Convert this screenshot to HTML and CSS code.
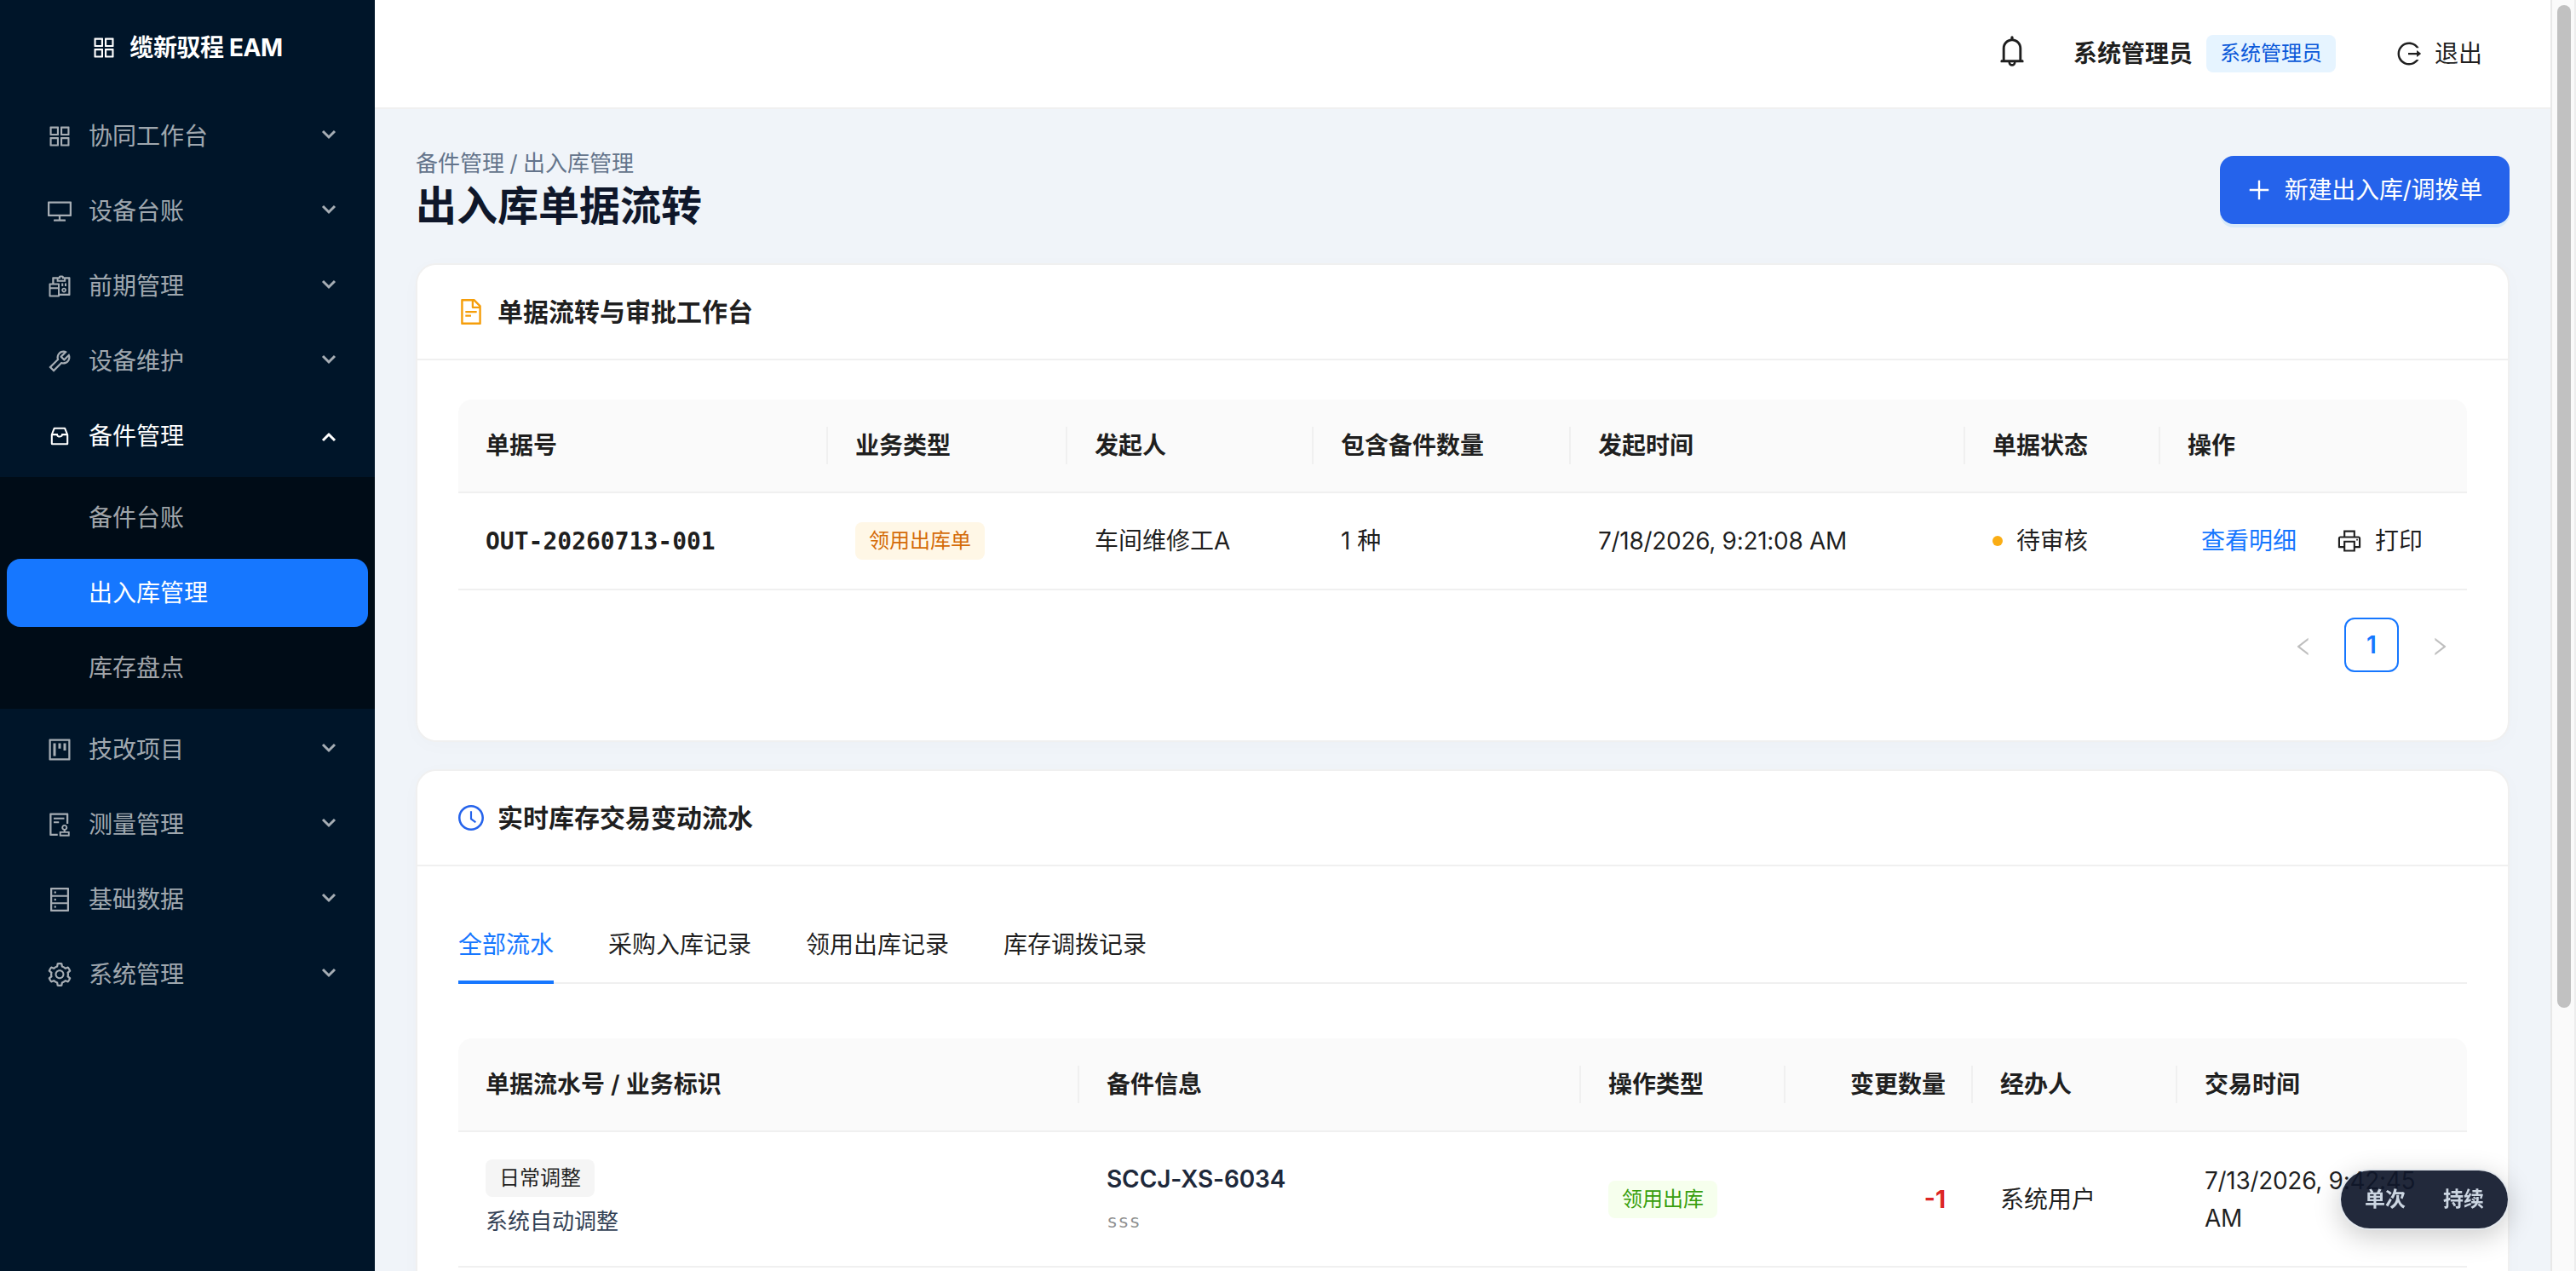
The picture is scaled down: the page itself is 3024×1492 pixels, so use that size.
FILE: index.html
```html
<!DOCTYPE html>
<html lang="zh-CN">
<head>
    <meta charset="utf-8">
    <title>缆新驭程 EAM</title>
    <link rel="stylesheet" href="styles.css">
</head>
<body>
    <!-- icon sprite -->
    <svg class="sprite">
        <symbol id="i-app" viewBox="64 64 896 896"><path d="M464 144H160c-8.8 0-16 7.2-16 16v304c0 8.8 7.2 16 16 16h304c8.8 0 16-7.2 16-16V160c0-8.8-7.2-16-16-16zm-52 268H212V212h200v200zm452-268H560c-8.8 0-16 7.2-16 16v304c0 8.8 7.2 16 16 16h304c8.8 0 16-7.2 16-16V160c0-8.8-7.2-16-16-16zm-52 268H612V212h200v200zM464 544H160c-8.8 0-16 7.2-16 16v304c0 8.8 7.2 16 16 16h304c8.8 0 16-7.2 16-16V560c0-8.8-7.2-16-16-16zm-52 268H212V612h200v200zm452-268H560c-8.8 0-16 7.2-16 16v304c0 8.8 7.2 16 16 16h304c8.8 0 16-7.2 16-16V560c0-8.8-7.2-16-16-16zm-52 268H612V612h200v200z"/></symbol>
        <symbol id="i-desktop" viewBox="64 64 896 896"><path d="M928 140H96c-17.7 0-32 14.3-32 32v496c0 17.7 14.3 32 32 32h380v112H304c-8.8 0-16 7.2-16 16v48c0 4.4 3.6 8 8 8h432c4.4 0 8-3.6 8-8v-48c0-8.8-7.2-16-16-16H548V700h380c17.7 0 32-14.3 32-32V172c0-17.7-14.3-32-32-32zm-40 488H136V212h752v416z"/></symbol>
        <symbol id="i-recon" viewBox="64 64 896 896"><path d="M676 565c-50.8 0-92 41.2-92 92s41.2 92 92 92 92-41.2 92-92-41.2-92-92-92zm0 126c-18.8 0-34-15.2-34-34s15.2-34 34-34 34 15.2 34 34-15.2 34-34 34zm204-523H668c0-30.9-25.1-56-56-56h-80c-30.9 0-56 25.1-56 56H264c-17.7 0-32 14.3-32 32v200h-88c-17.7 0-32 14.3-32 32v448c0 17.7 14.3 32 32 32h336c17.7 0 32-14.3 32-32v-16h368c17.7 0 32-14.3 32-32V200c0-17.7-14.3-32-32-32zm-412 64h72v-56h64v56h72v48H468v-48zm-20 616H176V616h272v232zm0-296H176v-88h272v88zm392 240H512V432c0-17.7-14.3-32-32-32H304V240h100v104h336V240h100v552z"/><path d="M704 408v96c0 4.4 3.6 8 8 8h48c4.4 0 8-3.6 8-8v-96c0-4.4-3.6-8-8-8h-48c-4.4 0-8 3.6-8 8zM592 512h48c4.4 0 8-3.6 8-8v-96c0-4.4-3.6-8-8-8h-48c-4.4 0-8 3.6-8 8v96c0 4.4 3.6 8 8 8z"/></symbol>
        <symbol id="i-tool" viewBox="64 64 896 896"><path d="M876.6 239.5c-.5-.9-1.2-1.8-2-2.5-5-5-13.1-5-18.1 0L684.2 409.3l-67.9-67.9L788.7 169c.8-.8 1.4-1.6 2-2.5 3.6-6.1 1.6-13.9-4.5-17.5-98.2-58-226.8-44.7-311.3 39.7-67 67-89.2 162-66.5 247.4l-293 293c-3 3-2.8 7.9.3 11l169.7 169.7c3.1 3.1 8.1 3.3 11 .3l292.9-292.9c85.5 22.8 180.5.7 247.6-66.4 84.4-84.5 97.7-213.1 39.7-311.3zM786 499.8c-58.1 58.1-145.3 69.3-214.6 33.6l-8.8 8.8-.1-.1-274 274.1-79.2-79.2 230.1-230.1s0 .1.1.1l52.8-52.8c-35.7-69.3-24.5-156.5 33.6-214.6a184.2 184.2 0 01144-53.5L537 318.9a32.05 32.05 0 000 45.3l124.5 124.5a32.05 32.05 0 0045.3 0l132.8-132.8c3.7 51.8-14.4 104.8-53.6 143.9z"/></symbol>
        <symbol id="i-inbox" viewBox="0 0 1024 1024"><path d="M885.2 446.3l-.2-.8-112.2-285.1c-5-16.1-19.9-27.2-36.8-27.2H281.2c-17 0-32.1 11.3-36.9 27.6L139.4 443l-.3.7-.2.8c-1.3 4.9-1.7 9.9-1 14.8-.1 1.6-.2 3.2-.2 4.8V830a60.9 60.9 0 0060.8 60.8h627.2c33.5 0 60.8-27.3 60.9-60.8V464.1c0-1.3 0-2.6-.1-3.7.4-4.9 0-9.6-1.3-14.1zm-295.8-43l-.3 15.7c-.8 44.9-31.8 75.1-77.1 75.1-22.1 0-41.1-7.1-54.8-20.6S436 441.2 435.6 419l-.3-15.7H229.5L309 210h399.2l81.7 193.3H589.4zm-375 76.8h157.3c24.3 57.1 76 90.8 140.4 90.8 33.7 0 65-9.4 90.3-27.2 22.2-15.6 39.5-37.4 50.7-63.6h156.5V814H214.4V480.1z"/></symbol>
        <symbol id="i-project" viewBox="64 64 896 896"><path d="M280 752h80c4.4 0 8-3.6 8-8V280c0-4.4-3.6-8-8-8h-80c-4.4 0-8 3.6-8 8v464c0 4.4 3.6 8 8 8zm192-280h80c4.4 0 8-3.6 8-8V280c0-4.4-3.6-8-8-8h-80c-4.4 0-8 3.6-8 8v184c0 4.4 3.6 8 8 8zm192 72h80c4.4 0 8-3.6 8-8V280c0-4.4-3.6-8-8-8h-80c-4.4 0-8 3.6-8 8v256c0 4.4 3.6 8 8 8zm216-432H144c-17.7 0-32 14.3-32 32v736c0 17.7 14.3 32 32 32h736c17.7 0 32-14.3 32-32V144c0-17.7-14.3-32-32-32zm-40 728H184V184h656v656z"/></symbol>
        <symbol id="i-audit" viewBox="64 64 896 896"><path d="M296 250c-4.4 0-8 3.6-8 8v48c0 4.4 3.6 8 8 8h384c4.4 0 8-3.6 8-8v-48c0-4.4-3.6-8-8-8H296zm184 144H296c-4.4 0-8 3.6-8 8v48c0 4.4 3.6 8 8 8h184c4.4 0 8-3.6 8-8v-48c0-4.4-3.6-8-8-8zm-48 458H208V148h560v320c0 4.4 3.6 8 8 8h56c4.4 0 8-3.6 8-8V108c0-17.7-14.3-32-32-32H168c-17.7 0-32 14.3-32 32v784c0 17.7 14.3 32 32 32h264c4.4 0 8-3.6 8-8v-56c0-4.4-3.6-8-8-8zm440-88H728v-36.6c46.3-13.8 80-56.6 80-107.4 0-61.9-50.1-112-112-112s-112 50.1-112 112c0 50.7 33.7 93.6 80 107.4V764H520c-8.8 0-16 7.2-16 16v152c0 8.8 7.2 16 16 16h352c8.8 0 16-7.2 16-16V780c0-8.8-7.2-16-16-16zM646 620c0-27.6 22.4-50 50-50s50 22.4 50 50-22.4 50-50 50-50-22.4-50-50zm180 266H566v-60h260v60z"/></symbol>
        <symbol id="i-database" viewBox="64 64 896 896"><path d="M832 64H192c-17.7 0-32 14.3-32 32v832c0 17.7 14.3 32 32 32h640c17.7 0 32-14.3 32-32V96c0-17.7-14.3-32-32-32zm-600 72h560v208H232V136zm560 480H232V408h560v208zm0 272H232V680h560v208zM304 240a40 40 0 1080 0 40 40 0 10-80 0zm0 272a40 40 0 1080 0 40 40 0 10-80 0zm0 272a40 40 0 1080 0 40 40 0 10-80 0z"/></symbol>
        <symbol id="i-setting" viewBox="64 64 896 896"><path d="M924.8 625.7l-65.5-56c3.1-19 4.7-38.4 4.7-57.8s-1.6-38.8-4.7-57.8l65.5-56a32.03 32.03 0 009.3-35.2l-.9-2.6a443.74 443.74 0 00-79.7-137.9l-1.8-2.1a32.12 32.12 0 00-35.1-9.5l-81.3 28.9c-30-24.6-63.5-44-99.7-57.6l-15.7-85a32.05 32.05 0 00-25.8-25.7l-2.7-.5c-52.1-9.4-106.9-9.4-159 0l-2.7.5a32.05 32.05 0 00-25.8 25.7l-15.8 85.4a351.86 351.86 0 00-99 57.4l-81.9-29.1a32 32 0 00-35.1 9.5l-1.8 2.1a446.02 446.02 0 00-79.7 137.9l-.9 2.6c-4.5 12.5-.8 26.5 9.3 35.2l66.3 56.6c-3.1 18.8-4.6 38-4.6 57.1 0 19.2 1.5 38.4 4.6 57.1L99 625.5a32.03 32.03 0 00-9.3 35.2l.9 2.6c18.1 50.4 44.9 96.9 79.7 137.9l1.8 2.1a32.12 32.12 0 0035.1 9.5l81.9-29.1c29.8 24.5 63.1 43.9 99 57.4l15.8 85.4a32.05 32.05 0 0025.8 25.7l2.7.5a449.4 449.4 0 00159 0l2.7-.5a32.05 32.05 0 0025.8-25.7l15.7-85a350 350 0 0099.7-57.6l81.3 28.9a32 32 0 0035.1-9.5l1.8-2.1c34.8-41.1 61.6-87.5 79.7-137.9l.9-2.6c4.5-12.3.8-26.3-9.3-35zM788.3 465.9c2.5 15.1 3.8 30.6 3.8 46.1s-1.3 31-3.8 46.1l-6.6 40.1 74.7 63.9a370.03 370.03 0 01-42.6 73.6L721 702.8l-31.4 25.8c-23.9 19.6-50.5 35-79.3 45.8l-38.1 14.3-17.9 97a377.5 377.5 0 01-85 0l-17.9-97.2-37.8-14.5c-28.5-10.8-55-26.2-78.7-45.7l-31.4-25.9-93.4 33.2c-17-22.9-31.2-47.6-42.6-73.6l75.5-64.5-6.5-40c-2.4-14.9-3.7-30.3-3.7-45.5 0-15.3 1.2-30.6 3.7-45.5l6.5-40-75.5-64.5c11.3-26.1 25.6-50.7 42.6-73.6l93.4 33.2 31.4-25.9c23.7-19.5 50.2-34.9 78.7-45.7l37.9-14.3 17.9-97.2c28.1-3.2 56.8-3.2 85 0l17.9 97 38.1 14.3c28.7 10.8 55.4 26.2 79.3 45.8l31.4 25.8 92.8-32.9c17 22.9 31.2 47.6 42.6 73.6L781.8 426l6.5 39.9zM512 326c-97.2 0-176 78.8-176 176s78.8 176 176 176 176-78.8 176-176-78.8-176-176-176zm79.2 255.2A111.6 111.6 0 01512 614c-29.9 0-58-11.7-79.2-32.8A111.6 111.6 0 01400 502c0-29.9 11.7-58 32.8-79.2C454 401.6 482.1 390 512 390c29.9 0 58 11.6 79.2 32.8A111.6 111.6 0 01624 502c0 29.9-11.7 58-32.8 79.2z"/></symbol>
        <symbol id="i-chevron" viewBox="0 0 18 12"><path d="M2 2l7 7 7-7" fill="none" stroke="currentColor" stroke-width="3"/></symbol>
        <symbol id="i-bell" viewBox="64 64 896 896"><path d="M816 768h-24V428c0-141.1-104.3-257.8-240-277.2V112c0-22.1-17.9-40-40-40s-40 17.9-40 40v38.8C336.3 170.2 232 286.9 232 428v340h-24c-17.7 0-32 14.3-32 32v32c0 4.4 3.6 8 8 8h216c0 61.8 50.2 112 112 112s112-50.2 112-112h216c4.4 0 8-3.6 8-8v-32c0-17.7-14.3-32-32-32zM512 888c-26.5 0-48-21.5-48-48h96c0 26.5-21.5 48-48 48zM304 768V428c0-55.6 21.6-107.8 60.9-147.1S456.4 220 512 220c55.6 0 107.8 21.6 147.1 60.9S720 372.4 720 428v340H304z"/></symbol>
        <symbol id="i-logout" viewBox="64 64 896 896"><path d="M868 732h-70.3c-4.8 0-9.3 2.1-12.3 5.8-7 8.5-14.5 16.7-22.4 24.5a353.84 353.84 0 01-112.7 75.9A352.8 352.8 0 01512.4 866c-47.9 0-94.3-9.4-137.9-27.8a353.84 353.84 0 01-112.7-75.9 353.28 353.28 0 01-76-112.5C167.3 606.2 158 559.9 158 512s9.4-94.2 27.8-137.8c17.8-42.1 43.4-80 76-112.5s70.5-58.1 112.7-75.9c43.6-18.4 90-27.8 137.9-27.8 47.9 0 94.3 9.3 137.9 27.8 42.2 17.8 80.1 43.4 112.7 75.9 7.9 7.9 15.3 16.1 22.4 24.5 3 3.7 7.6 5.8 12.3 5.8H868c6.3 0 10.2-7 6.7-12.3C798 160.5 663.8 81.6 511.3 82 271.7 82.6 79.6 277.1 82 516.4 84.4 751.9 276.2 942 512.4 942c152.1 0 285.7-78.8 362.3-197.7 3.4-5.3-.4-12.3-6.7-12.3zm88.9-226.3L815 393.7c-5.3-4.2-13-.4-13 6.3v76H488c-4.4 0-8 3.6-8 8v56c0 4.4 3.6 8 8 8h314v76c0 6.7 7.8 10.5 13 6.3l141.9-112a8 8 0 000-12.6z"/></symbol>
        <symbol id="i-plus" viewBox="64 64 896 896"><path d="M482 152h60q8 0 8 8v704q0 8-8 8h-60q-8 0-8-8V160q0-8 8-8z"/><path d="M192 474h672q8 0 8 8v60q0 8-8 8H160q-8 0-8-8v-60q0-8 8-8z"/></symbol>
        <symbol id="i-file" viewBox="64 64 896 896"><path d="M854.6 288.6L639.4 73.4c-6-6-14.1-9.4-22.6-9.4H192c-17.7 0-32 14.3-32 32v832c0 17.7 14.3 32 32 32h640c17.7 0 32-14.3 32-32V311.3c0-8.5-3.4-16.7-9.4-22.7zM790.2 326H602V137.8L790.2 326zm1.8 562H232V136h302v216a42 42 0 0042 42h216v494zM504 618H320c-4.4 0-8 3.6-8 8v48c0 4.4 3.6 8 8 8h184c4.4 0 8-3.6 8-8v-48c0-4.4-3.6-8-8-8zM312 490v48c0 4.4 3.6 8 8 8h384c4.4 0 8-3.6 8-8v-48c0-4.4-3.6-8-8-8H320c-4.4 0-8 3.6-8 8z"/></symbol>
        <symbol id="i-clock" viewBox="64 64 896 896"><path d="M512 64C264.6 64 64 264.6 64 512s200.6 448 448 448 448-200.6 448-448S759.4 64 512 64zm0 820c-205.4 0-372-166.6-372-372s166.6-372 372-372 372 166.6 372 372-166.6 372-372 372z"/><path d="M686.7 638.6L544.1 535.5V288c0-4.4-3.6-8-8-8H488c-4.4 0-8 3.6-8 8v275.4c0 2.6 1.2 5 3.3 6.5l165.4 120.6c3.6 2.6 8.6 1.8 11.2-1.7l28.6-39c2.6-3.7 1.8-8.7-1.8-11.2z"/></symbol>
        <symbol id="i-printer" viewBox="64 64 896 896"><path d="M820 436h-40c-4.4 0-8 3.6-8 8v40c0 4.4 3.6 8 8 8h40c4.4 0 8-3.6 8-8v-40c0-4.4-3.6-8-8-8zm32-104H732V120c0-4.4-3.6-8-8-8H300c-4.4 0-8 3.6-8 8v212H172c-44.2 0-80 35.8-80 80v328c0 17.7 14.3 32 32 32h168v132c0 4.4 3.6 8 8 8h424c4.4 0 8-3.6 8-8V772h168c17.7 0 32-14.3 32-32V412c0-44.2-35.8-80-80-80zM360 180h304v152H360V180zm304 664H360V568h304v276zm200-140H732V500H292v204H160V412c0-6.6 5.4-12 12-12h680c6.6 0 12 5.4 12 12v292z"/></symbol>
        <symbol id="i-left" viewBox="64 64 896 896"><path d="M724 218.3V141c0-6.7-7.7-10.4-12.9-6.3L260.3 486.8a31.86 31.86 0 000 50.3l450.8 352.1c5.3 4.1 12.9.4 12.9-6.3v-77.3c0-4.9-2.3-9.6-6.1-12.6l-360-281 360-281.1c3.8-3 6.1-7.7 6.1-12.6z"/></symbol>
        <symbol id="i-right" viewBox="64 64 896 896"><path d="M765.7 486.8L314.9 134.7A7.97 7.97 0 00302 141v77.3c0 4.9 2.3 9.6 6.1 12.6l360 281.1-360 281.1c-3.9 3-6.1 7.7-6.1 12.6V883c0 6.7 7.7 10.4 12.9 6.3l450.8-352.1a31.96 31.96 0 000-50.4z"/></symbol>
    </svg>

    <aside class="sider">
        <div class="logo"><svg class="icon"><use href="#i-app"/></svg><span>缆新驭程 EAM</span></div>
        <nav class="menu">
            <a class="item"><svg class="icon"><use href="#i-app"/></svg><span>协同工作台</span><svg class="arrow"><use href="#i-chevron"/></svg></a>
            <a class="item"><svg class="icon"><use href="#i-desktop"/></svg><span>设备台账</span><svg class="arrow"><use href="#i-chevron"/></svg></a>
            <a class="item"><svg class="icon"><use href="#i-recon"/></svg><span>前期管理</span><svg class="arrow"><use href="#i-chevron"/></svg></a>
            <a class="item"><svg class="icon"><use href="#i-tool"/></svg><span>设备维护</span><svg class="arrow"><use href="#i-chevron"/></svg></a>
            <a class="item open"><svg class="icon"><use href="#i-inbox"/></svg><span>备件管理</span><svg class="arrow"><use href="#i-chevron"/></svg></a>
            <div class="submenu">
                <a class="item">备件台账</a>
                <a class="item selected">出入库管理</a>
                <a class="item">库存盘点</a>
            </div>
            <a class="item"><svg class="icon"><use href="#i-project"/></svg><span>技改项目</span><svg class="arrow"><use href="#i-chevron"/></svg></a>
            <a class="item"><svg class="icon"><use href="#i-audit"/></svg><span>测量管理</span><svg class="arrow"><use href="#i-chevron"/></svg></a>
            <a class="item"><svg class="icon"><use href="#i-database"/></svg><span>基础数据</span><svg class="arrow"><use href="#i-chevron"/></svg></a>
            <a class="item"><svg class="icon"><use href="#i-setting"/></svg><span>系统管理</span><svg class="arrow"><use href="#i-chevron"/></svg></a>
        </nav>
    </aside>

    <div class="layout">
        <header class="header">
            <svg class="icon bell"><use href="#i-bell"/></svg>
            <b class="user">系统管理员</b>
            <span class="tag blue">系统管理员</span>
            <a class="logout"><svg class="icon"><use href="#i-logout"/></svg>退出</a>
        </header>

        <main class="content">
            <div class="page-head">
                <div class="page-title">
                    <div class="crumb">备件管理 / 出入库管理</div>
                    <h1>出入库单据流转</h1>
                </div>
                <button class="primary"><svg class="icon"><use href="#i-plus"/></svg>新建出入库/调拨单</button>
            </div>

            <section class="card">
                <div class="card-head"><svg class="icon orange"><use href="#i-file"/></svg>单据流转与审批工作台</div>
                <div class="card-body">
                    <table class="table orders">
                        <colgroup><col class="o1"><col class="o2"><col class="o3"><col class="o4"><col class="o5"><col class="o6"><col class="o7"></colgroup>
                        <thead>
                            <tr><th>单据号</th><th>业务类型</th><th>发起人</th><th>包含备件数量</th><th>发起时间</th><th>单据状态</th><th>操作</th></tr>
                        </thead>
                        <tbody>
                            <tr>
                                <td><span class="code">OUT-20260713-001</span></td>
                                <td><span class="tag amber">领用出库单</span></td>
                                <td>车间维修工A</td>
                                <td>1 种</td>
                                <td><span class="date">7/18/2026, 9:21:08 AM</span></td>
                                <td><div class="status"><i class="dot"></i>待审核</div></td>
                                <td><div class="actions"><a class="link">查看明细</a><a class="print"><svg class="icon"><use href="#i-printer"/></svg>打印</a></div></td>
                            </tr>
                        </tbody>
                    </table>
                    <div class="pager">
                        <span class="page"><svg class="icon"><use href="#i-left"/></svg></span>
                        <span class="page current">1</span>
                        <span class="page"><svg class="icon"><use href="#i-right"/></svg></span>
                    </div>
                </div>
            </section>

            <section class="card">
                <div class="card-head"><svg class="icon royal"><use href="#i-clock"/></svg>实时库存交易变动流水</div>
                <div class="card-body">
                    <div class="tabs">
                        <a class="tab active">全部流水</a>
                        <a class="tab">采购入库记录</a>
                        <a class="tab">领用出库记录</a>
                        <a class="tab">库存调拨记录</a>
                    </div>
                    <table class="table flows">
                        <colgroup><col class="f1"><col class="f2"><col class="f3"><col class="f4"><col class="f5"><col class="f6"></colgroup>
                        <thead>
                            <tr><th>单据流水号 / 业务标识</th><th>备件信息</th><th>操作类型</th><th class="right">变更数量</th><th>经办人</th><th>交易时间</th></tr>
                        </thead>
                        <tbody>
                            <tr>
                                <td><span class="tag gray">日常调整</span><div class="note">系统自动调整</div></td>
                                <td><div class="sku">SCCJ-XS-6034</div><div class="spec">sss</div></td>
                                <td><span class="tag green">领用出库</span></td>
                                <td class="right"><b class="minus">-1</b></td>
                                <td>系统用户</td>
                                <td><span class="date">7/13/2026, 9:42:45 AM</span></td>
                            </tr>
                        </tbody>
                    </table>
                </div>
            </section>
        </main>
    </div>

    <div class="scrollbar"><div class="thumb"></div></div>
    <div class="float"><span>单次</span><span>持续</span></div>
</body>
</html>
```
FILE: styles.css
```css
* {
  box-sizing: border-box;
}
body {
  margin: 0;
  display: flex;
  height: 1492px;
  overflow: hidden;
  background: #f0f4f9;
  color: rgba(0, 0, 0, 0.88);
  font-family: Inter, "Noto Sans CJK SC", sans-serif;
  font-size: 28px;
  line-height: 44px;
}
.sprite {
  position: absolute;
  width: 0;
  height: 0;
}
.icon {
  width: 28px;
  height: 28px;
  flex: none;
  fill: currentColor;
}

/* sidebar */
.sider {
  width: 440px;
  flex: none;
  background: #001529;
  color: rgba(255, 255, 255, 0.65);
}
.logo {
  height: 112px;
  display: flex;
  align-items: center;
  justify-content: center;
  gap: 16px;
  color: #fff;
  font-weight: 700;
  letter-spacing: -0.4px;
}
.menu {
  display: flex;
  flex-direction: column;
  gap: 8px;
  padding-top: 8px;
}
.item {
  height: 80px;
  margin: 0 8px;
  padding: 0 36px 0 48px;
  display: flex;
  align-items: center;
  gap: 20px;
  border-radius: 16px;
}
.item.open, .item.selected {
  color: #fff;
}
.arrow {
  width: 18px;
  height: 12px;
  margin: -4px 1px 0 auto;
}
.open .arrow {
  transform: rotate(180deg);
  margin-top: 2px;
}
.submenu {
  display: flex;
  flex-direction: column;
  gap: 8px;
  padding: 8px 0;
  background: #000c17;
}
.submenu .item {
  padding-left: 96px;
}
.item.selected {
  background: #1677ff;
}

/* header */
.layout {
  flex: 1;
  display: flex;
  flex-direction: column;
}
.header {
  height: 128px;
  flex: none;
  display: flex;
  align-items: center;
  justify-content: flex-end;
  padding-right: 80px;
  background: #fff;
  border-bottom: 2px solid #f0f0f0;
}
.bell {
  width: 36px;
  height: 36px;
  margin: -6px 54px 0 0;
}
.user {
  margin-right: 16px;
}
.logout {
  display: flex;
  align-items: center;
  gap: 16px;
  margin-left: 72px;
}

.tag {
  display: inline-block;
  height: 44px;
  line-height: 44px;
  padding: 0 16px;
  border-radius: 8px;
  font-size: 24px;
  vertical-align: top;
}
.blue { background: #e6f4ff; color: #0958d9; }
.amber { background: #fff7e6; color: #d46b08; }
.green { background: #f6ffed; color: #389e0d; }
.gray { background: #f5f5f5; }

/* page */
.content {
  padding: 43px 48px 0;
}
.page-head {
  height: 104px;
  margin-bottom: 34px;
  display: flex;
  align-items: center;
  justify-content: space-between;
}
.page-title {
  margin-bottom: 4px;
}
.crumb {
  font-size: 26px;
  line-height: 41px;
  word-spacing: -1px;
  color: #64748b;
}
h1 {
  margin: 0;
  font-size: 48px;
  line-height: 60px;
  color: #0f172a;
}
.primary {
  height: 80px;
  padding: 0 32px;
  display: flex;
  align-items: center;
  gap: 16px;
  border: none;
  border-radius: 16px;
  background: #2563eb;
  color: #fff;
  font: inherit;
  letter-spacing: -0.2px;
  box-shadow: 0 4px 0 rgba(5, 145, 255, 0.1);
}

.card {
  margin-bottom: 32px;
  background: #fff;
  border: 2px solid #f0f0f0;
  border-radius: 24px;
  box-shadow: 0 4px 24px rgba(0, 0, 0, 0.02);
}
.card-head {
  height: 112px;
  padding: 0 48px;
  display: flex;
  align-items: center;
  gap: 16px;
  border-bottom: 2px solid #f0f0f0;
  font-size: 30px;
  font-weight: 600;
}
.card-head .icon {
  width: 30px;
  height: 30px;
}
.orange { color: #f59e0b; }
.royal { color: #2563eb; }
.card-body {
  padding: 46px 48px 48px;
}

/* tables */
.table {
  width: 2358px;
  table-layout: fixed;
  border-collapse: separate;
  border-spacing: 0;
}
th {
  position: relative;
  padding: 32px;
  background: #fafafa;
  border-bottom: 2px solid #f0f0f0;
  font-weight: 600;
  text-align: left;
}
th:first-child { border-top-left-radius: 16px; }
th:last-child { border-top-right-radius: 16px; }
th:not(:last-child)::after {
  content: "";
  position: absolute;
  top: 32px;
  right: 0;
  width: 2px;
  height: 44px;
  background: #f0f0f0;
}
td {
  padding: 32px;
  border-bottom: 2px solid #f0f0f0;
}
.orders td {
  height: 114px;
  padding-top: 0;
  padding-bottom: 0;
}
.right {
  text-align: right;
}
.o1 { width: 434px; }
.o2 { width: 281px; }
.o3 { width: 289px; }
.o4 { width: 302px; }
.o5 { width: 463px; }
.o6 { width: 229px; }
.o7 { width: 360px; }
.f1 { width: 729px; }
.f2 { width: 589px; }
.f3 { width: 240px; }
.f4 { width: 220px; }
.f5 { width: 240px; }
.f6 { width: 340px; }

.code {
  font-family: "DejaVu Sans Mono", monospace;
  font-weight: 700;
}
.date {
  letter-spacing: -0.3px;
}
.status, .actions, .print {
  display: flex;
  align-items: center;
  gap: 16px;
}
.dot {
  width: 12px;
  height: 12px;
  border-radius: 50%;
  background: #faad14;
}
.actions {
  gap: 48px;
  padding-left: 16px;
}
.link {
  color: #1677ff;
}

.pager {
  display: flex;
  justify-content: flex-end;
  gap: 16px;
  margin: 32px 0;
}
.page {
  width: 64px;
  height: 64px;
  display: flex;
  align-items: center;
  justify-content: center;
  color: rgba(0, 0, 0, 0.25);
}
.page .icon {
  width: 24px;
  height: 24px;
  margin-top: 4px;
}
.current {
  border: 2px solid #1677ff;
  border-radius: 12px;
  color: #1677ff;
  font-weight: 600;
}

.tabs {
  display: flex;
  gap: 64px;
  height: 90px;
  margin-top: 2px;
  margin-bottom: 64px;
  border-bottom: 2px solid #f0f0f0;
}
.tab {
  height: 90px;
  padding-top: 22px;
}
.active {
  color: #1677ff;
  border-bottom: 4px solid #1677ff;
}

.flows tbody td {
  height: 159px;
}
.note {
  margin-top: 8px;
  font-size: 26px;
  line-height: 41px;
  color: #334155;
}
.sku {
  font-weight: 600;
  letter-spacing: -0.1px;
  color: #1e293b;
}
.spec {
  margin-top: 8px;
  font-family: "DejaVu Sans Mono", monospace;
  font-size: 22px;
  line-height: 40px;
  color: rgba(0, 0, 0, 0.45);
}
.minus {
  color: #dc2626;
}

/* window scrollbar */
.scrollbar {
  width: 30px;
  flex: none;
  padding: 6px 4px 0 6px;
  background: #fafafa;
  border-left: 2px solid #e8e8e8;
  border-right: 2px solid #ededed;
}
.thumb {
  width: 16px;
  height: 1177px;
  border-radius: 8px;
  background: #c1c1c1;
}

/* floating switch */
.float {
  position: fixed;
  right: 78px;
  bottom: 48px;
  height: 72px;
  padding: 0 28px;
  display: flex;
  align-items: center;
  gap: 44px;
  background: rgba(15, 23, 42, 0.92);
  background-clip: padding-box;
  border: 2px solid rgba(148, 163, 184, 0.25);
  border-radius: 36px;
  box-shadow: 0 8px 32px rgba(0, 0, 0, 0.2);
  color: #cbd5e1;
  font-size: 24px;
  font-weight: 600;
}
```
